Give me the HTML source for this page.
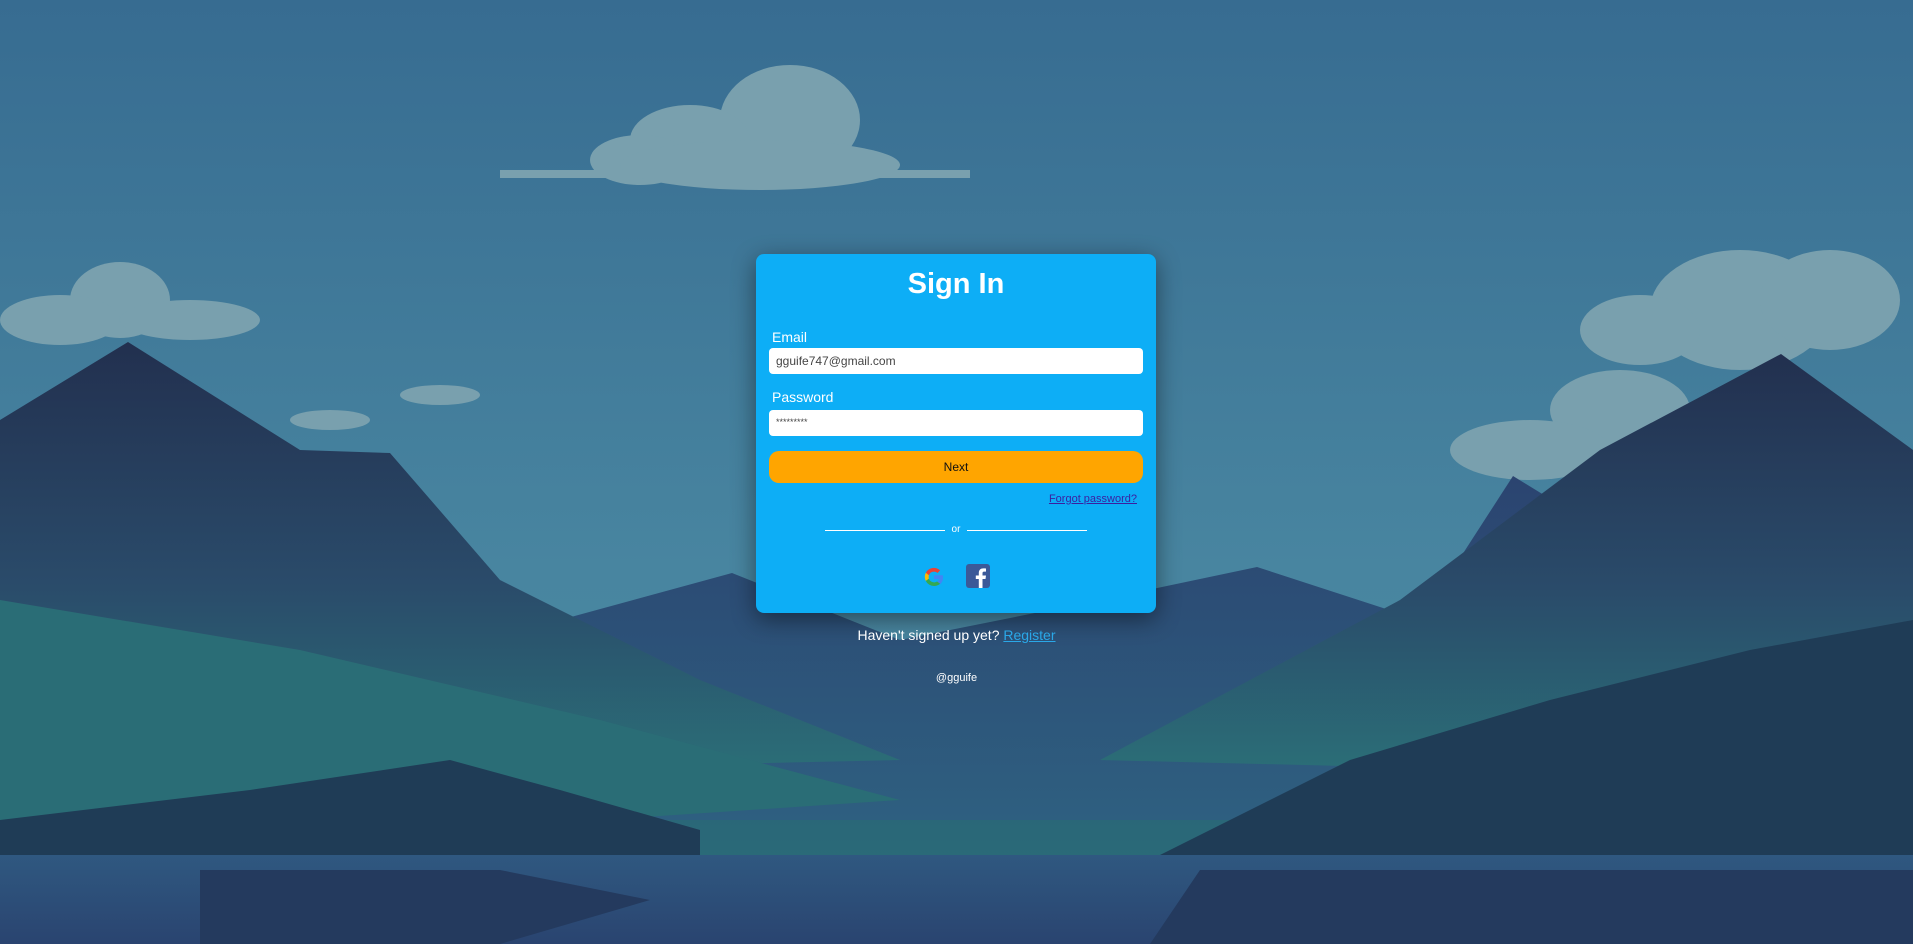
<!DOCTYPE html>
<html><head><meta charset="utf-8"><style>
*{margin:0;padding:0;box-sizing:border-box}
html,body{width:1913px;height:944px;overflow:hidden;font-family:"Liberation Sans",sans-serif}
#bg{position:absolute;left:0;top:0}
.card{position:absolute;left:756px;top:254px;width:400px;height:359px;background:#0daef6;border-radius:8px;box-shadow:0 6px 24px rgba(0,0,0,.45)}
h1{position:absolute;top:14px;width:100%;text-align:center;color:#fff;font-size:29px;font-weight:bold}
.lbl{position:absolute;left:16px;color:#fff;font-size:14px}
.inp{position:absolute;left:13px;width:374px;height:26px;background:#fff;border-radius:4px;font-size:12px;color:#444;padding:6px 7px}
.btn{position:absolute;left:13px;top:197px;width:374px;height:32px;background:#ffa500;border-radius:10px;text-align:center;line-height:32px;font-size:12px;color:#111}
.fp{position:absolute;right:19px;top:239px;font-size:11px;color:#3b1fa0;text-decoration:underline}
.or{position:absolute;left:69px;top:270px;width:262px;height:12px;font-size:10px;color:#fff;text-align:center;line-height:12px}
.or:before,.or:after{content:"";position:absolute;top:6px;width:120px;height:1px;background:#fff}
.or:before{left:0}.or:after{right:0}
.ft{position:absolute;width:100%;text-align:center;color:#fff}
</style></head><body>
<svg id="bg" width="1913" height="944" viewBox="0 0 1913 944">
<defs>
<linearGradient id="sky" x1="0" y1="0" x2="0" y2="1"><stop offset="0" stop-color="#376c91"/><stop offset=".6" stop-color="#4885a0"/><stop offset="1" stop-color="#4a8a9e"/></linearGradient>
<linearGradient id="mt" x1="0" y1="0" x2="0" y2="1"><stop offset="0" stop-color="#22304f"/><stop offset=".55" stop-color="#2a4b6a"/><stop offset="1" stop-color="#2b7078"/></linearGradient>
<linearGradient id="mt2" x1="0" y1="0" x2="0" y2="1"><stop offset="0" stop-color="#2b4470"/><stop offset="1" stop-color="#2e5f80"/></linearGradient>
<linearGradient id="base" x1="0" y1="0" x2="0" y2="1"><stop offset="0" stop-color="#2c5a7a"/><stop offset="1" stop-color="#2a6a78"/></linearGradient>
<linearGradient id="lake" x1="0" y1="0" x2="0" y2="1"><stop offset="0" stop-color="#2f5880"/><stop offset="1" stop-color="#2a4470"/></linearGradient>
</defs>
<rect width="1913" height="944" fill="url(#sky)"/>
<g fill="#79a0ae">
<ellipse cx="790" cy="120" rx="70" ry="55"/><ellipse cx="690" cy="140" rx="60" ry="35"/><ellipse cx="640" cy="160" rx="50" ry="25"/><ellipse cx="760" cy="165" rx="140" ry="25"/><rect x="500" y="170" width="470" height="8"/>
<ellipse cx="120" cy="300" rx="50" ry="38"/><ellipse cx="60" cy="320" rx="60" ry="25"/><ellipse cx="190" cy="320" rx="70" ry="20"/>
<ellipse cx="1740" cy="310" rx="90" ry="60"/><ellipse cx="1830" cy="300" rx="70" ry="50"/><ellipse cx="1640" cy="330" rx="60" ry="35"/><ellipse cx="1620" cy="410" rx="70" ry="40"/><ellipse cx="1530" cy="450" rx="80" ry="30"/>
<ellipse cx="440" cy="395" rx="40" ry="10"/><ellipse cx="330" cy="420" rx="40" ry="10"/>
</g>
<rect y="640" width="1913" height="220" fill="url(#base)"/>
<polygon fill="url(#mt2)" points="560,620 732,573 900,640 1100,600 1257,567 1420,620 1513,476 1650,560 1913,520 1913,820 560,820"/>
<polygon fill="url(#mt)" points="0,420 128,342 300,450 390,453 500,580 700,680 900,760 0,780"/>
<polygon fill="url(#mt)" points="1100,760 1400,600 1600,450 1781,354 1913,450 1913,780"/>
<polygon fill="#2a6d76" points="0,600 300,650 600,720 900,800 0,860"/>
<polygon fill="#1f3c56" points="0,820 250,790 450,760 560,790 700,830 700,870 0,880"/>
<polygon fill="#1f3c56" points="1150,860 1350,760 1550,700 1750,650 1913,620 1913,870"/>
<rect y="855" width="1913" height="89" fill="url(#lake)"/>
<polygon fill="#243a5e" points="200,870 500,870 650,900 500,944 200,944"/>
<polygon fill="#243a5e" points="1200,870 1913,870 1913,944 1150,944"/>
</svg>
<div class="card">
<h1>Sign In</h1>
<div class="lbl" style="top:75px">Email</div>
<div class="inp" style="top:94px">gguife747@gmail.com</div>
<div class="lbl" style="top:135px">Password</div>
<div class="inp" style="top:156px;font-size:9px;padding-top:7px">*********</div>
<div class="btn">Next</div>
<div class="fp">Forgot password?</div>
<div class="or">or</div>
<svg style="position:absolute;left:166px;top:311px" width="24" height="24" viewBox="0 0 24 24">
<path d="M21 12.2c0-.7-.1-1.4-.2-2H12v3.9h5a4.3 4.3 0 0 1-1.9 2.8v2.3h3A9 9 0 0 0 21 12.2z" fill="#4285f4"/>
<path d="M12 21a9 9 0 0 0 6.1-2.2l-3-2.3a5.5 5.5 0 0 1-8.2-2.9H3.8v2.4A9 9 0 0 0 12 21z" fill="#34a853"/>
<path d="M6.9 13.6a5.4 5.4 0 0 1 0-3.4V7.8H3.8a9 9 0 0 0 0 8.1z" fill="#fbbc05"/>
<path d="M12 6.6c1.3 0 2.5.5 3.5 1.4l2.6-2.6A9 9 0 0 0 3.8 7.8l3.1 2.4A5.4 5.4 0 0 1 12 6.6z" fill="#ea4335"/>
</svg>
<svg style="position:absolute;left:210px;top:310px" width="24" height="24" viewBox="0 0 24 24">
<rect width="24" height="24" rx="3" fill="#3b5998"/>
<path d="M16.5 24v-9h3l.5-3.5h-3.5V9.3c0-1 .3-1.7 1.8-1.7H20V4.5c-.3 0-1.4-.1-2.7-.1-2.7 0-4.5 1.6-4.5 4.6v2.5h-3V15h3v9z" fill="#fff"/>
</svg>
</div>
<div class="ft" style="top:627px;font-size:14px">Haven't signed up yet? <span style="color:#2aa8e8;text-decoration:underline">Register</span></div>
<div class="ft" style="top:672px;font-size:11px">@gguife</div>
</body></html>
